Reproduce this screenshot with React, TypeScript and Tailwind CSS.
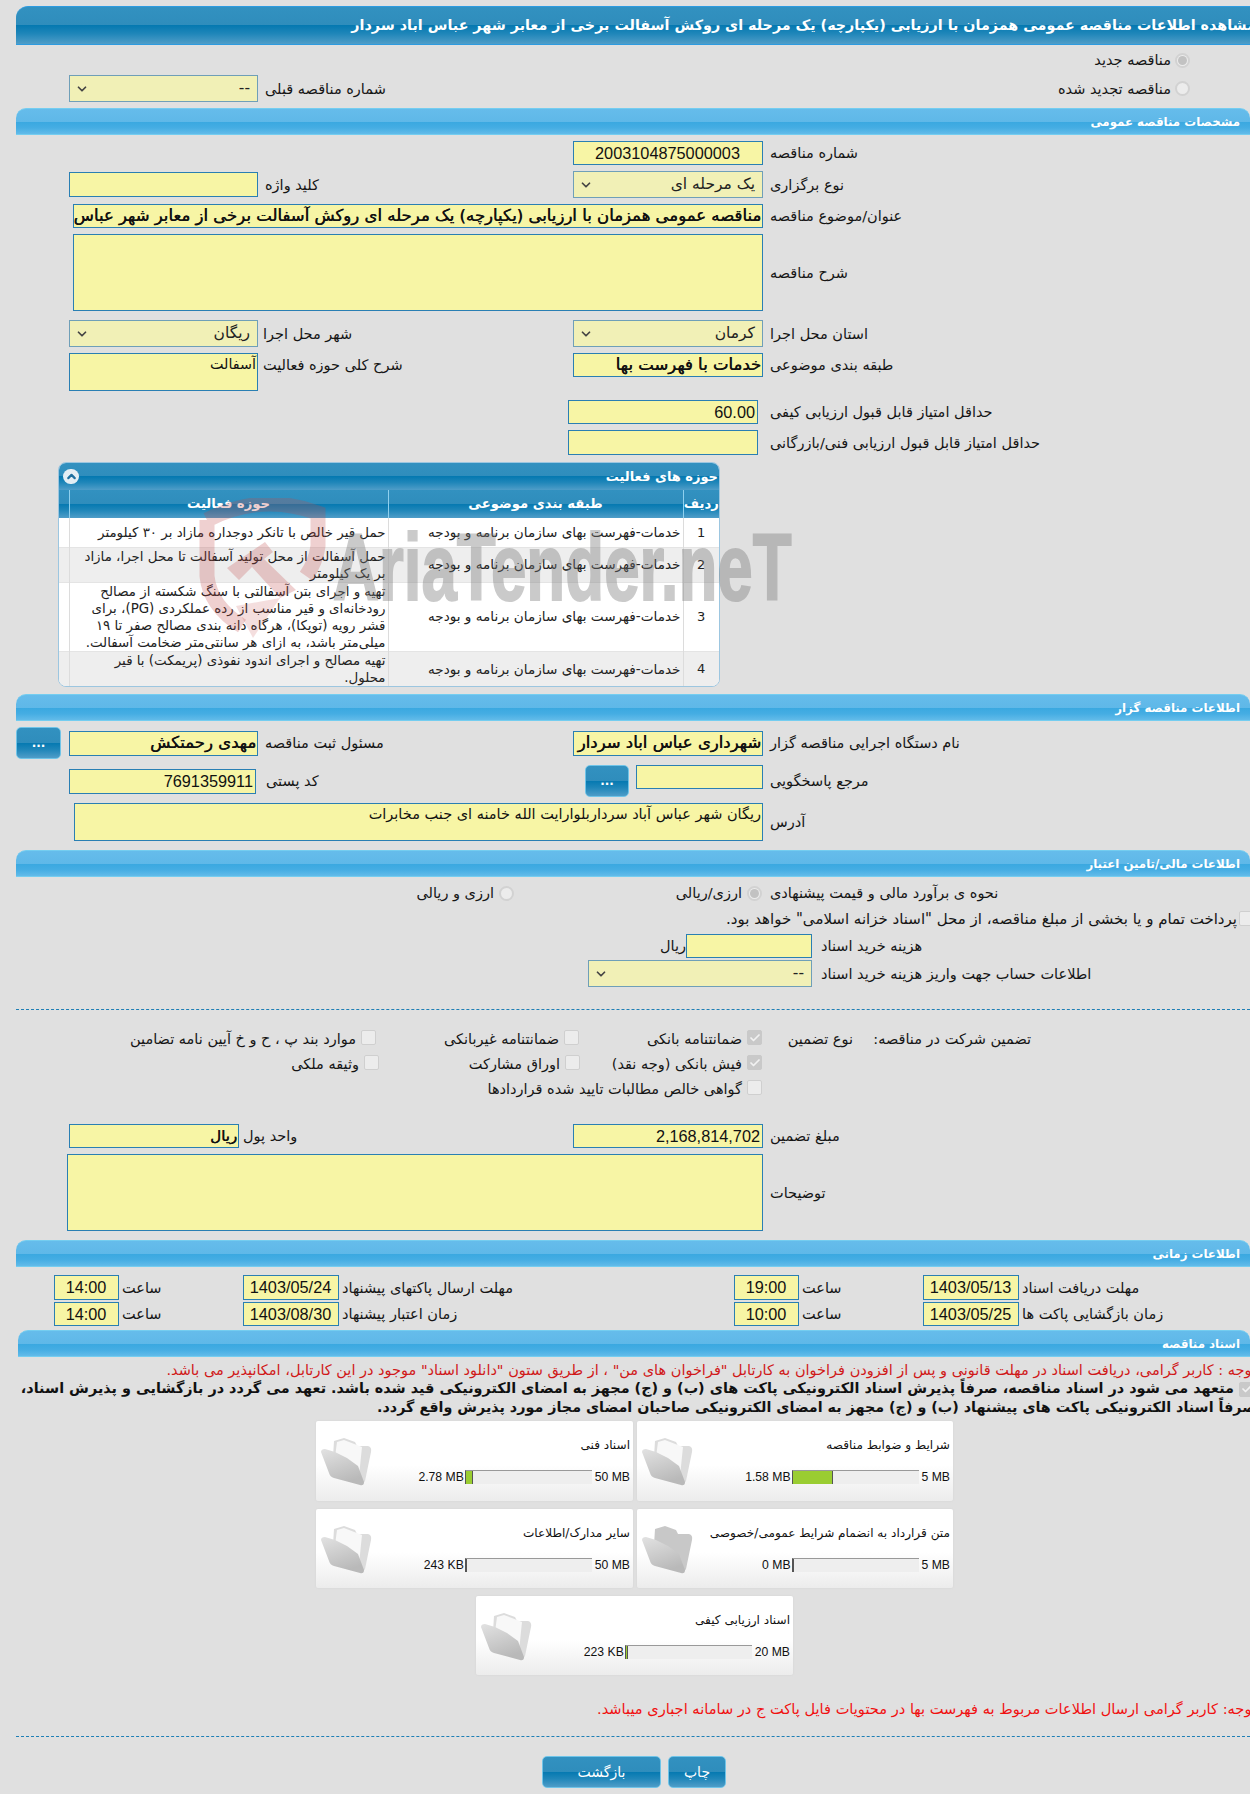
import React from "react";
import clsx from "clsx";
import { twMerge } from "tailwind-merge";
import { Check, ChevronDown, ChevronUp } from "lucide-react";

const darkBar =
  "bg-[linear-gradient(180deg,#3291c0_0%,#2f8dbc_50%,#0579b1_50%,#1f86b9_72%,#4f9dc8_100%)]";
const lightBar =
  "bg-[linear-gradient(180deg,#65bceb_0%,#5fb8e8_50%,#39a8e0_50%,#45ade3_75%,#62bbe9_100%)]";

function Section({ title, className }: { title: string; className?: string }) {
  return (
    <div
      dir="rtl"
      className={clsx(
        "h-[27px] flex items-center pr-[10px] pt-[2px] rounded-t-[10px] border-y border-[#74cdf0] text-white font-bold text-[11.8px]",
        lightBar,
        className
      )}
    >
      {title}
    </div>
  );
}

function Label({ children, className }: { children: React.ReactNode; className?: string }) {
  return (
    <span dir="rtl" className={twMerge("whitespace-nowrap text-[14.5px] text-[#151515] inline-block pt-[2px]", className)}>
      {children}
    </span>
  );
}

type FieldProps = {
  children?: React.ReactNode;
  className?: string;
  bold?: boolean;
  multi?: boolean;
};

function Field({ children, className, bold, multi }: FieldProps) {
  return (
    <div
      dir="rtl"
      className={twMerge(
        "shrink-0 overflow-hidden whitespace-nowrap border border-[#2a7fb3] bg-[#f7f5a5] text-[#111] pr-[1px] box-border text-[14.3px]",
        !multi && "flex items-center",
        bold && "text-[16.5px] [text-shadow:0.5px_0_0_#111]",
        className
      )}
    >
      {children}
    </div>
  );
}

function Num({ children }: { children: React.ReactNode }) {
  return <span className="font-['Liberation_Sans',sans-serif] text-[16.3px] px-[1px]">{children}</span>;
}

function SelectBox({ children, className }: { children: React.ReactNode; className?: string }) {
  return (
    <div
      className={clsx(
        "shrink-0 h-[27px] flex items-center justify-between border border-[#6f9fb8] bg-[#f1f0b6] pl-[5px] pr-[7px] text-[15.5px] text-[#222]",
        className
      )}
    >
      <ChevronDown size={14} strokeWidth={3} className="text-[#444]" />
      <span dir="rtl">{children}</span>
    </div>
  );
}

function Radio({ on }: { on?: boolean }) {
  return (
    <span className="shrink-0 w-[15px] h-[15px] rounded-full border-2 border-[#d2d2d2] bg-[#ececec] flex items-center justify-center">
      {on && <span className="w-[9px] h-[9px] rounded-full bg-[#c2c2c2]" />}
    </span>
  );
}

function Box({ on }: { on?: boolean }) {
  return (
    <span
      className={clsx(
        "shrink-0 w-[15px] h-[15px] rounded-[2px] border flex items-center justify-center",
        on ? "bg-[#c9c9c9] border-[#c9c9c9]" : "bg-[#ececec] border-[#cfcfcf]"
      )}
    >
      {on && <Check size={12} strokeWidth={3.5} className="text-[#f2f2f2]" />}
    </span>
  );
}

function CheckItem({ on, text, className }: { on?: boolean; text: string; className?: string }) {
  return (
    <div className={clsx("flex items-center gap-[5px]", className)}>
      <Box on={on} />
      <Label className="pt-[4px]">{text}</Label>
    </div>
  );
}

function BlueButton({ children, className }: { children: React.ReactNode; className?: string }) {
  return (
    <div
      className={clsx(
        "shrink-0 flex items-center justify-center rounded-[5px] border border-[#6fc4e8] text-white",
        darkBar,
        className
      )}
    >
      {children}
    </div>
  );
}

function Folder({ empty }: { empty?: boolean }) {
  const id = empty ? "fe" : "ff";
  return (
    <svg width="56" height="52" viewBox="0 0 56 52" className="shrink-0">
      <defs>
        <linearGradient id={id} x1="0" y1="0" x2="0.4" y2="1">
          <stop offset="0" stopColor="#e2e2e2" />
          <stop offset="1" stopColor="#b9b9b9" />
        </linearGradient>
      </defs>
      <path
        d="M15 4 L25 1 L36 5 L38 9 L49 9 Q53 10 52 15 L46 44 Q44 48 41 44 L14 20 Z"
        fill={empty ? "#c8c8c8" : "#dcdcdc"}
      />
      {!empty && <path d="M18 5 L25 3 L43 10 L40 39 L16 20 Z" fill="#f8f8f8" />}
      <path
        d="M2 15 Q2 12 6 12 L16 15 L28 21 L39 29 L45 45 Q45 49 41 48 L15 41 Q11 40 10 36 Z"
        fill={`url(#${id})`}
      />
    </svg>
  );
}

function DocCard({
  title,
  max,
  used,
  pct,
  empty,
  className,
}: {
  title: string;
  max: string;
  used: string;
  pct: number;
  empty?: boolean;
  className?: string;
}) {
  return (
    <div
      className={clsx(
        "flex rounded-[2px] bg-[linear-gradient(180deg,#ffffff_0%,#ffffff_55%,#ececec_100%)] shadow-[0_0_2px_#d0d0d0]",
        className
      )}
    >
      <div className="pl-[3px] pt-[16px]">
        <Folder empty={empty} />
      </div>
      <div className="flex-1 min-w-0 pr-[3px]">
        <div dir="rtl" className="mt-[14px] h-[20px] leading-[20px] text-[12.1px] text-[#111] whitespace-nowrap">
          {title}
        </div>
        <div className="mt-[13px] flex items-center justify-end gap-[1px] text-[12.2px] text-[#111] font-['Liberation_Sans',sans-serif]">
          <span>{used}</span>
          <div className="w-[127px] h-[14px] bg-[#eeeeee] border-t border-t-[#999] border-l border-l-[#555]">
            <div className="h-full bg-[#9acd32] border-r border-r-[#555]" style={{ width: `${pct}%` }} />
          </div>
          <span className="ml-[2px]">{max}</span>
        </div>
      </div>
    </div>
  );
}

const activities = [
  { n: "1", text: "حمل قیر خالص با تانکر دوجداره مازاد بر ۳۰ کیلومتر", h: "h-[29px]" },
  { n: "2", text: "حمل آسفالت از محل تولید آسفالت تا محل اجرا، مازاد\nبر یک کیلومتر", h: "h-[35px]" },
  {
    n: "3",
    text: "تهیه و اجرای بتن آسفالتی با سنگ شکسته از مصالح\nرودخانه‌ای و قیر مناسب از رده عملکردی (PG)، برای\nقشر رویه (توپکا)، هرگاه دانه بندی مصالح صفر تا ۱۹\nمیلی‌متر باشد، به ازای هر سانتی‌متر ضخامت آسفالت.",
    h: "h-[69px]",
  },
  { n: "4", text: "تهیه مصالح و اجرای اندود نفوذی (پریمکت) با قیر\nمحلول.", h: "h-[36px]" },
];

function ActivityPanel() {
  return (
    <div className="mt-[7px] ml-[58px] w-[662px] h-[225px] rounded-[8px] overflow-hidden border border-[#9cc6e0] bg-white">
      <div dir="rtl" className={clsx("h-[27px] flex items-center justify-between pr-[1px] pl-[4px] text-white font-bold text-[13px]", darkBar)}>
        <span>حوزه های فعالیت</span>
        <span className="w-[16px] h-[15px] rounded-full bg-[#e4eef4] flex items-center justify-center">
          <ChevronUp size={13} strokeWidth={4} className="text-[#1f6f9f]" />
        </span>
      </div>
      <table dir="rtl" className="w-full table-fixed border-collapse">
        <thead>
          <tr className={clsx("h-[28px] text-white font-bold text-[13.2px]", darkBar)}>
            <th className="w-[36px] border-l border-l-[#8fd0ee] font-bold">ردیف</th>
            <th className="w-[295px] border-l border-l-[#8fd0ee] font-bold">طبقه بندی موضوعی</th>
            <th className="w-[319px] border-l border-l-[#8fd0ee] font-bold">حوزه فعالیت</th>
            <th />
          </tr>
        </thead>
        <tbody>
          {activities.map((row, i) => (
            <tr key={row.n} className={clsx(row.h, "text-[#222] border-b border-b-[#e4e4e4]", i % 2 === 1 ? "bg-[#eeeeee]" : "bg-white")}>
              <td className="text-center text-[13px] border-l border-l-[#dcdcdc]">{row.n}</td>
              <td className="pr-[2px] text-[13.6px] border-l border-l-[#dcdcdc] whitespace-nowrap">خدمات-فهرست بهای سازمان برنامه و بودجه</td>
              <td className="pr-[2px] text-[13.4px] border-l border-l-[#dcdcdc] whitespace-pre leading-[17px]">{row.text}</td>
              <td />
            </tr>
          ))}
        </tbody>
      </table>
    </div>
  );
}

function Watermark() {
  return (
    <div className="absolute left-[196px] top-[498px] w-[620px] h-[150px] pointer-events-none z-10">
      <svg width="135" height="145" viewBox="0 0 135 145" className="absolute left-0 top-0">
        <path
          d="M11 22 Q65 -6 122 15 L122 48 Q120 64 110 78 M11 22 L11 78 Q14 108 46 128"
          fill="none"
          stroke="#c24a4a"
          strokeOpacity="0.26"
          strokeWidth="15"
        />
        <path
          d="M31 70 L69 44 L77 54 L68 61 L100 92 L84 100 L56 69 L43 82 Z"
          fill="#c24a4a"
          fillOpacity="0.26"
        />
        <path d="M40 108 L84 100 L57 140 Z" fill="#c24a4a" fillOpacity="0.18" />
      </svg>
      <span className="absolute left-[137px] top-[4px] origin-left scale-x-[0.67] opacity-[0.38] whitespace-nowrap font-['Liberation_Sans',sans-serif] font-bold text-[95px] leading-[130px] text-[#777777] [-webkit-text-stroke:2px_#777777]">
        AriaTender.neT
      </span>
    </div>
  );
}

export default function App() {
  return (
    <div className="relative w-[1250px] h-[1794px] overflow-hidden bg-[#e0e0e0] pt-[6px] font-['DejaVu_Sans',sans-serif]">
      <Watermark />

      {/* title */}
      <div
        dir="rtl"
        className={clsx(
          "ml-[16px] h-[39px] flex items-center rounded-tl-[12px] border-y border-[#2d9be0] text-white font-bold text-[14.3px] whitespace-nowrap overflow-hidden",
          darkBar
        )}
      >
        <span className="mr-[-6px]">مشاهده اطلاعات مناقصه عمومی همزمان با ارزیابی (یکپارچه) یک مرحله ای روکش آسفالت برخی از معابر شهر عباس اباد سردار</span>
      </div>

      {/* new / renewed */}
      <div className="h-[63px]">
        <div dir="rtl" className="pr-[60px] flex items-center gap-[4px] h-[30px]">
          <Radio on />
          <Label>مناقصه جدید</Label>
        </div>
        <div className="flex items-center h-[27px]">
          <div className="w-[1050px] pl-[69px] flex items-center">
            <SelectBox className="w-[189px]">--</SelectBox>
            <Label className="ml-[7px]">شماره مناقصه قبلی</Label>
          </div>
          <div dir="rtl" className="flex-1 pr-[60px] flex items-center gap-[4px]">
            <Radio />
            <Label>مناقصه تجدید شده</Label>
          </div>
        </div>
      </div>

      <Section title="مشخصات مناقصه عمومی" className="ml-[16px]" />

      <div className="mt-[6px] h-[24px] flex items-center pl-[573px]">
        <Field className="w-[190px] h-[24px] justify-center"><Num>2003104875000003</Num></Field>
        <Label className="ml-[7px]">شماره مناقصه</Label>
      </div>

      <div className="mt-[6px] h-[27px] flex items-center">
        <div className="w-[573px] pl-[69px] flex items-center">
          <Field className="w-[189px] h-[25px]" />
          <Label className="ml-[7px]">کلید واژه</Label>
        </div>
        <SelectBox className="w-[190px]">یک مرحله ای</SelectBox>
        <Label className="ml-[7px]">نوع برگزاری</Label>
      </div>

      <div className="mt-[6px] h-[24px] flex items-center pl-[73px]">
        <Field bold className="w-[690px] h-[24px]">مناقصه عمومی همزمان با ارزیابی (یکپارچه) یک مرحله ای روکش آسفالت برخی از معابر شهر عباس</Field>
        <Label className="ml-[7px]">عنوان/موضوع مناقصه</Label>
      </div>

      <div className="mt-[6px] h-[77px] flex items-center pl-[73px]">
        <Field multi className="w-[690px] h-[77px]" />
        <Label className="ml-[7px]">شرح مناقصه</Label>
      </div>

      <div className="mt-[9px] h-[27px] flex items-center">
        <div className="w-[573px] pl-[69px] flex items-center">
          <SelectBox className="w-[189px]">ریگان</SelectBox>
          <Label className="ml-[5px]">شهر محل اجرا</Label>
        </div>
        <SelectBox className="w-[190px]">کرمان</SelectBox>
        <Label className="ml-[7px]">استان محل اجرا</Label>
      </div>

      <div className="mt-[6px] h-[38px] flex items-start">
        <div className="w-[573px] pl-[69px] flex items-start">
          <Field multi className="w-[189px] h-[38px]">آسفالت</Field>
          <Label className="ml-[5px]">شرح کلی حوزه فعالیت</Label>
        </div>
        <Field bold className="w-[190px] h-[24px]">خدمات با فهرست بها</Field>
        <Label className="ml-[7px]">طبقه بندی موضوعی</Label>
      </div>

      <div className="mt-[9px] h-[24px] flex items-center pl-[568px]">
        <Field className="w-[190px] h-[24px]"><Num>60.00</Num></Field>
        <Label className="ml-[12px]">حداقل امتیاز قابل قبول ارزیابی کیفی</Label>
      </div>
      <div className="mt-[6px] h-[25px] flex items-center pl-[568px]">
        <Field className="w-[190px] h-[25px]" />
        <Label className="ml-[12px]">حداقل امتیاز قابل قبول ارزیابی فنی/بازرگانی</Label>
      </div>

      <ActivityPanel />

      <Section title="اطلاعات مناقصه گزار" className="ml-[16px] mt-[7px]" />

      <div className="mt-[6px] h-[32px] flex items-center">
        <div className="w-[573px] pl-[16px] flex items-center">
          <BlueButton className="w-[45px] h-[32px] mr-[8px] text-[12px] font-bold">...</BlueButton>
          <Field bold className="w-[189px] h-[25px]">مهدی رحمتکش</Field>
          <Label className="ml-[7px]">مسئول ثبت مناقصه</Label>
        </div>
        <Field bold className="w-[190px] h-[25px]">شهرداری عباس اباد سردار</Field>
        <Label className="ml-[7px]">نام دستگاه اجرایی مناقصه گزار</Label>
      </div>

      <div className="mt-[6px] h-[32px] flex items-center">
        <div className="w-[585px] pl-[69px] flex items-center">
          <Field className="w-[187px] h-[25px]"><Num>7691359911</Num></Field>
          <Label className="ml-[10px]">کد پستی</Label>
        </div>
        <BlueButton className="w-[44px] h-[32px] mr-[7px] text-[12px] font-bold">...</BlueButton>
        <Field className="w-[127px] h-[24px] self-start" />
        <Label className="ml-[7px]">مرجع پاسخگویی</Label>
      </div>

      <div className="mt-[6px] h-[38px] flex items-center pl-[74px]">
        <Field multi className="w-[689px] h-[38px] text-[14.5px]">ریگان شهر عباس آباد سرداربلوارایت الله خامنه ای جنب مخابرات</Field>
        <Label className="ml-[7px]">آدرس</Label>
      </div>

      <Section title="اطلاعات مالی/تامین اعتبار" className="ml-[16px] mt-[9px]" />

      <div className="mt-[4px] h-[24px] flex items-center">
        <div dir="rtl" className="w-[514px] flex items-center gap-[5px] pr-0">
          <Radio />
          <Label>ارزی و ریالی</Label>
        </div>
        <div dir="rtl" className="w-[248px] flex items-center gap-[5px]">
          <Radio on />
          <Label>ارزی/ریالی</Label>
        </div>
        <Label className="ml-[8px]">نحوه ی برآورد مالی و قیمت پیشنهادی</Label>
      </div>

      <div dir="rtl" className="h-[26px] flex items-center gap-[2px] mr-[-4px]">
        <Box />
        <Label className="text-[15px]">پرداخت تمام و یا بخشی از مبلغ مناقصه، از محل "اسناد خزانه اسلامی" خواهد بود.</Label>
      </div>

      <div className="mt-[3px] h-[24px] flex items-center pl-[662px]">
        <Label className="w-[24px]">ریال</Label>
        <Field className="w-[126px] h-[24px]" />
        <Label className="ml-[9px]">هزینه خرید اسناد</Label>
      </div>

      <div className="mt-[2px] h-[27px] flex items-center pl-[588px]">
        <SelectBox className="w-[224px]">--</SelectBox>
        <Label className="ml-[9px]">اطلاعات حساب جهت واریز هزینه خرید اسناد</Label>
      </div>

      <div className="mt-[22px] ml-[16px] border-t border-dashed border-t-[#1f7fb5]" />

      <div dir="rtl" className="mt-[15px] pr-[219px]">
        <div className="h-[25px] flex items-center">
          <Label className="w-[178px] pt-[4px]">تضمین شرکت در مناقصه:</Label>
          <Label className="w-[91px] pt-[4px]">نوع تضمین</Label>
          <CheckItem on text="ضمانتنامه بانکی" className="w-[183px]" />
          <CheckItem text="ضمانتنامه غیربانکی" className="w-[203px]" />
          <CheckItem text="موارد بند پ ، ح و خ آیین نامه تضامین" />
        </div>
        <div className="h-[25px] flex items-center pr-[269px]">
          <CheckItem on text="فیش بانکی (وجه نقد)" className="w-[182px]" />
          <CheckItem text="اوراق مشارکت" className="w-[201px]" />
          <CheckItem text="وثیقه ملکی" />
        </div>
        <div className="h-[25px] flex items-center pr-[269px]">
          <CheckItem text="گواهی خالص مطالبات تایید شده قراردادها" />
        </div>
      </div>

      <div className="mt-[24px] h-[24px] flex items-center">
        <div className="w-[573px] pl-[69px] flex items-center">
          <Field bold className="w-[170px] h-[24px] text-[15px]">ریال</Field>
          <Label className="ml-[4px]">واحد پول</Label>
        </div>
        <Field className="w-[190px] h-[24px]"><Num>2,168,814,702</Num></Field>
        <Label className="ml-[7px]">مبلغ تضمین</Label>
      </div>

      <div className="mt-[6px] h-[77px] flex items-center pl-[67px]">
        <Field multi className="w-[696px] h-[77px]" />
        <Label className="ml-[7px]">توضیحات</Label>
      </div>

      <Section title="اطلاعات زمانی" className="ml-[16px] mt-[9px]" />

      <div className="mt-[8px] h-[25px] flex items-center pl-[54px]">
        <div className="w-[189px] flex items-center">
          <Field className="w-[65px] h-[25px] justify-center"><Num>14:00</Num></Field>
          <Label className="ml-[3px]">ساعت</Label>
        </div>
        <div className="w-[491px] flex items-center">
          <Field className="w-[96px] h-[25px] justify-center"><Num>1403/05/24</Num></Field>
          <Label className="ml-[3px]">مهلت ارسال پاکتهای پیشنهاد</Label>
        </div>
        <div className="w-[189px] flex items-center">
          <Field className="w-[65px] h-[25px] justify-center"><Num>19:00</Num></Field>
          <Label className="ml-[3px]">ساعت</Label>
        </div>
        <Field className="w-[96px] h-[25px] justify-center"><Num>1403/05/13</Num></Field>
        <Label className="ml-[3px]">مهلت دریافت اسناد</Label>
      </div>

      <div className="mt-[2px] h-[24px] flex items-center pl-[54px]">
        <div className="w-[189px] flex items-center">
          <Field className="w-[65px] h-[24px] justify-center"><Num>14:00</Num></Field>
          <Label className="ml-[3px]">ساعت</Label>
        </div>
        <div className="w-[491px] flex items-center">
          <Field className="w-[96px] h-[24px] justify-center"><Num>1403/08/30</Num></Field>
          <Label className="ml-[3px]">زمان اعتبار پیشنهاد</Label>
        </div>
        <div className="w-[189px] flex items-center">
          <Field className="w-[65px] h-[24px] justify-center"><Num>10:00</Num></Field>
          <Label className="ml-[3px]">ساعت</Label>
        </div>
        <Field className="w-[96px] h-[24px] justify-center"><Num>1403/05/25</Num></Field>
        <Label className="ml-[3px]">زمان بازگشایی پاکت ها</Label>
      </div>

      <Section title="اسناد مناقصه" className="ml-[18px] mt-[4px]" />

      <div dir="rtl" className="mt-[4px] h-[18px] leading-[18px] mr-[-6px] whitespace-nowrap text-[14.5px] text-[#d01818]">
        توجه : کاربر گرامی، دریافت اسناد در مهلت قانونی و پس از افزودن فراخوان به کارتابل "فراخوان های من" ، از طریق ستون "دانلود اسناد" موجود در این کارتابل، امکانپذیر می باشد.
      </div>
      <div dir="rtl" className="h-[20px] flex items-center gap-[5px] mr-[-4px] whitespace-nowrap text-[14.4px] font-bold text-[#111]">
        <Box on />
        <span>متعهد می شود در اسناد مناقصه، صرفاً پذیرش اسناد الکترونیکی پاکت های (ب) و (ج) مجهز به امضای الکترونیکی قید شده باشد. تعهد می گردد در بازگشایی و پذیرش اسناد،</span>
      </div>
      <div dir="rtl" className="h-[16px] leading-[16px] mr-[-6px] whitespace-nowrap text-[14.3px] font-bold text-[#111]">
        صرفاً اسناد الکترونیکی پاکت های پیشنهاد (ب) و (ج) مجهز به امضای الکترونیکی صاحبان امضای مجاز مورد پذیرش واقع گردد.
      </div>

      <div className="mt-[6px] flex gap-[4px] pl-[316px]">
        <DocCard title="اسناد فنی" max="50 MB" used="2.78 MB" pct={6} className="w-[317px] h-[80px]" />
        <DocCard title="شرایط و ضوابط مناقصه" max="5 MB" used="1.58 MB" pct={32} className="w-[316px] h-[80px]" />
      </div>
      <div className="mt-[8px] flex gap-[4px] pl-[316px]">
        <DocCard title="سایر مدارک/اطلاعات" max="50 MB" used="243 KB" pct={1} className="w-[317px] h-[79px]" />
        <DocCard empty title="متن قرارداد به انضمام شرایط عمومی/خصوصی" max="5 MB" used="0 MB" pct={0} className="w-[316px] h-[79px]" />
      </div>
      <div className="mt-[8px] pl-[476px]">
        <DocCard title="اسناد ارزیابی کیفی" max="20 MB" used="223 KB" pct={2} className="w-[317px] h-[79px]" />
      </div>

      <div dir="rtl" className="mt-[25px] h-[18px] leading-[18px] mr-[-6px] whitespace-nowrap text-[14.6px] text-[#f01010]">
        توجه: کاربر گرامی ارسال اطلاعات مربوط به فهرست بها در محتویات فایل پاکت ج در سامانه اجباری میباشد.
      </div>

      <div className="mt-[18px] ml-[16px] border-t border-dashed border-t-[#1f7fb5]" />

      <div className="mt-[19px] pl-[542px] flex gap-[7px]">
        <BlueButton className="w-[119px] h-[32px] text-[14px]">بازگشت</BlueButton>
        <BlueButton className="w-[58px] h-[32px] text-[14px]">چاپ</BlueButton>
      </div>
    </div>
  );
}
